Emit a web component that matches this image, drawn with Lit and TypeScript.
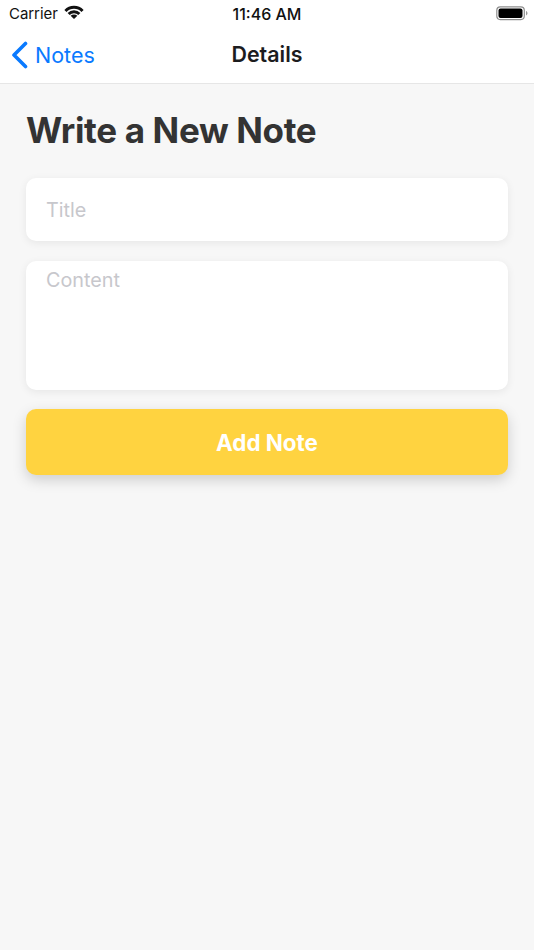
import { LitElement, html, css } from "lit";
import { customElement } from "lit/decorators.js";

@customElement("app-root")
export class AppRoot extends LitElement {
  static styles = css`
    :host { display: block; width: 534px; height: 950px; background: #f7f7f7; font-family: Inter, "Liberation Sans", sans-serif; overflow: hidden; }
    .top { background: #fff; height: 83px; border-bottom: 1px solid #e6e6e6; box-sizing: content-box; display: flex; flex-direction: column; }
    .status { height: 27px; display: grid; grid-template-columns: minmax(0, 1fr) auto minmax(0, 1fr); align-items: center; padding: 0 6px 0 9px; color: #111; }
    .st-left { display: flex; align-items: center; gap: 6px; font-size: 15px; letter-spacing: -0.05px; }
    .wifi { margin-top: -2px; }
    .time { font-size: 16px; font-weight: 500; margin-left: -3px; }
    .st-right { display: flex; justify-content: flex-end; }
    .nav { flex: 1; display: grid; grid-template-columns: minmax(0, 1fr) auto minmax(0, 1fr); align-items: center; padding: 0 11px; }
    .back { display: flex; align-items: center; gap: 7px; color: #0a7aff; font-size: 21.5px; }
    .nav-title { font-size: 21.4px; font-weight: 600; color: #1c1c1e; margin-top: -2px; }
    .body { padding: 26px 26px 0; display: flex; flex-direction: column; }
    h1 { margin: 0 0 28px; font-size: 35px; line-height: 40px; font-weight: 700; color: #333; letter-spacing: -0.35px; }
    .card { background: #fff; border-radius: 10px; box-shadow: 0 2px 8px rgba(0,0,0,0.07); color: #c7c7cc; font-size: 19.8px; padding: 0 20px; display: flex; }
    .title { height: 63px; align-items: center; margin-bottom: 20px; }
    .content { height: 129px; padding-top: 6px; box-sizing: border-box; align-items: flex-start; margin-bottom: 19px; line-height: 26px; }
    .btn { height: 66px; background: #ffd340; border-radius: 10px; box-shadow: 0 5px 14px rgba(0,0,0,0.17); color: #fff; font-size: 22.4px; font-weight: 700; display: flex; align-items: center; justify-content: center; }
  `;
  render() {
    return html`
      <div class="top">
        <div class="status">
          <div class="st-left">
            <span>Carrier</span>
            <svg class="wifi" width="20" height="15" viewBox="0 0 20 15"><path fill="none" stroke="#111" stroke-width="2.900" d="M1.440 6.020A11.700 11.700 0 0 1 18.560 6.020"/><path fill="none" stroke="#111" stroke-width="2.900" d="M4.660 9.020A7.300 7.300 0 0 1 15.340 9.020"/><path fill="#111" d="M10 14L6.640 10.860A4.600 4.600 0 0 1 13.360 10.860z"/></svg>
          </div>
          <div class="time">11:46 AM</div>
          <div class="st-right">
            <svg width="32" height="15" viewBox="0 0 32 15"><rect x="0.8" y="0.8" width="27.500" height="12.800" rx="3.500" fill="none" stroke="#8e8e8e" stroke-width="1.200"/><rect x="2.500" y="2.500" width="24" height="9.500" rx="2" fill="#000"/><path d="M30 5v4.500c.9-.3 1.500-1.200 1.500-2.200s-.6-2-1.500-2.300z" fill="#9a9a9a"/></svg>
          </div>
        </div>
        <div class="nav">
          <div class="back">
            <svg width="17" height="28" viewBox="0 0 17 28"><path d="M14.500 2.500L3 14l11.500 11.500" fill="none" stroke="#0a7aff" stroke-width="3.600" stroke-linecap="round" stroke-linejoin="round"/></svg>
            <span>Notes</span>
          </div>
          <div class="nav-title">Details</div>
          <div></div>
        </div>
      </div>
      <div class="body">
        <h1>Write a New Note</h1>
        <div class="card title">Title</div>
        <div class="card content">Content</div>
        <div class="btn">Add Note</div>
      </div>
    `;
  }
}
